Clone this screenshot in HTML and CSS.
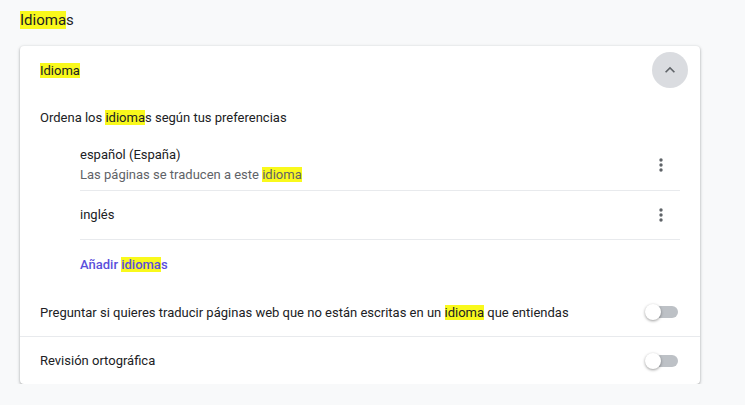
FILE: index.html
```html
<!DOCTYPE html>
<html lang="es">
<head>
<meta charset="utf-8">
<link rel="stylesheet" href="styles.css">
</head>
<body>
<h2 class="page-title"><span class="hl">Idioma</span>s</h2>
<section class="card">
  <div class="row header-row">
    <span class="hl">Idioma</span>
    <button class="circle-btn" aria-label="Contraer">
      <svg width="20" height="20" viewBox="0 0 24 24"><path d="M12 8l-6 6 1.41 1.41L12 10.83l4.59 4.58L18 14z" fill="#5f6368"/></svg>
    </button>
  </div>
  <div class="row plain-row"><span>Ordena los <span class="hl">idioma</span>s según tus preferencias</span></div>
  <div class="lang-list">
    <div class="lang-item two-line">
      <div class="lang-text">
        <div>español (España)</div>
        <div class="secondary">Las páginas se traducen a este <span class="hl">idioma</span></div>
      </div>
      <span class="dots"><svg width="4" height="14" viewBox="0 0 4 14"><circle cx="2" cy="2" r="1.7"/><circle cx="2" cy="7" r="1.7"/><circle cx="2" cy="12" r="1.7"/></svg></span>
    </div>
    <div class="lang-item">
      <div class="lang-text">inglés</div>
      <span class="dots"><svg width="4" height="14" viewBox="0 0 4 14"><circle cx="2" cy="2" r="1.7"/><circle cx="2" cy="7" r="1.7"/><circle cx="2" cy="12" r="1.7"/></svg></span>
    </div>
    <div class="add-row"><a class="add-link">Añadir <span class="hl">idioma</span>s</a></div>
  </div>
  <div class="row toggle-row">
    <span>Preguntar si quieres traducir páginas web que no están escritas en un <span class="hl">idioma</span> que entiendas</span>
    <span class="toggle"><span class="knob"></span></span>
  </div>
  <div class="row toggle-row bordered">
    <span>Revisión ortográfica</span>
    <span class="toggle"><span class="knob"></span></span>
  </div>
</section>
</body>
</html>
```
FILE: styles.css
```css
html, body {
  margin: 0;
  padding: 0;
  background: #f8f9fa;
}
body {
  font-family: Roboto, "Noto Sans", sans-serif;
  font-size: 13px;
  color: #202124;
}
.hl {
  background: #f9f91c;
}
.page-title {
  margin: 0;
  padding: 12px 20px 0 20px;
  height: 46px;
  box-sizing: border-box;
  font-size: 15px;
  font-weight: 400;
  line-height: 16px;
  color: #202124;
}
.card {
  width: 680px;
  margin-left: 20px;
  background: #fff;
  border-radius: 4px;
  box-shadow: 0 1px 2px rgba(60,64,67,0.3), 0 1px 3px 1px rgba(60,64,67,0.15);
}
.row {
  display: flex;
  align-items: center;
  padding: 0 20px;
  box-sizing: border-box;
}
.header-row {
  height: 48px;
  justify-content: space-between;
  padding-right: 12px;
}
.circle-btn {
  width: 36px;
  height: 36px;
  border-radius: 50%;
  border: none;
  background: #dadce0;
  padding: 0;
  display: flex;
  align-items: center;
  justify-content: center;
}
.plain-row {
  height: 46px;
}
.lang-list {
  padding: 0 20px 0 60px;
}
.lang-item {
  display: flex;
  align-items: center;
  justify-content: space-between;
  height: 48px;
  border-bottom: 1px solid #e8eaed;
}
.lang-item.two-line {
  height: 50px;
}
.lang-text {
  line-height: 20px;
}
.secondary {
  color: #5f6368;
}
.dots {
  width: 4px;
  height: 14px;
  margin-right: 17px;
  display: flex;
}
.dots svg {
  fill: #5f6368;
}
.add-row {
  height: 48px;
  display: flex;
  align-items: center;
}
.add-link {
  color: #5a4fdc;
  font-weight: 500;
  cursor: pointer;
}
.toggle-row {
  height: 48px;
  justify-content: space-between;
  padding-right: 22px;
}
.toggle-row.bordered {
  border-top: 1px solid #e8eaed;
}
.toggle {
  position: relative;
  width: 32px;
  height: 12px;
  border-radius: 6px;
  background: #bdc1c6;
  margin-left: 20px;
}
.knob {
  position: absolute;
  left: -1px;
  top: -2px;
  width: 16px;
  height: 16px;
  border-radius: 50%;
  background: #fff;
  box-shadow: 0 1px 3px rgba(0,0,0,0.4);
}
```
